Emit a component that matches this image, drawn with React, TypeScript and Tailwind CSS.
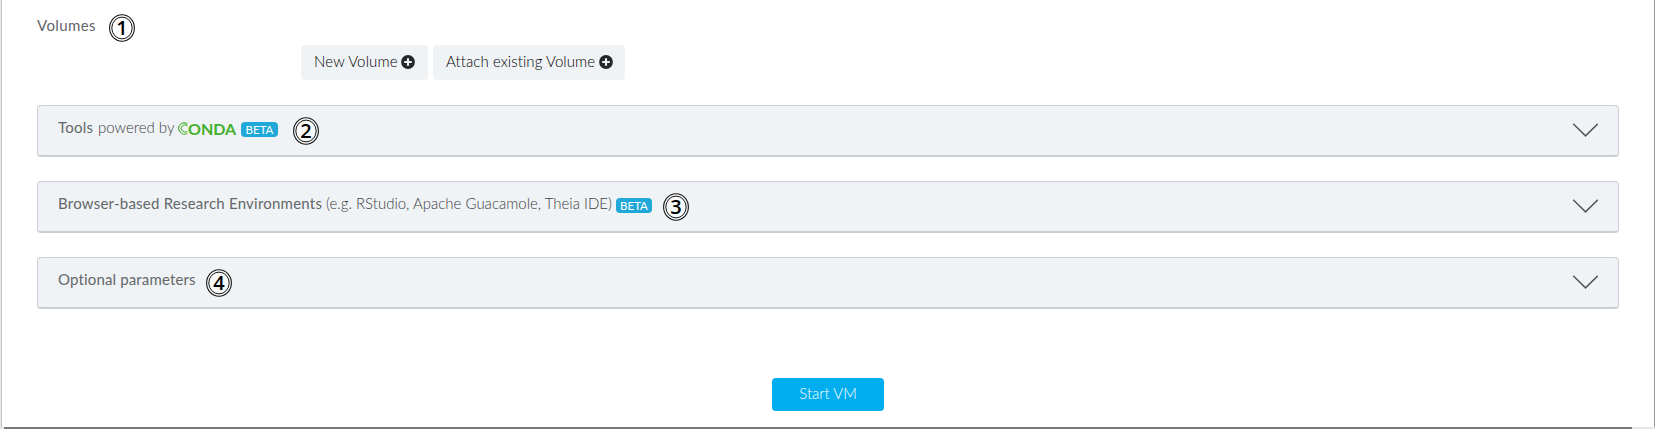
import type { ReactNode } from "react";

function Marker({ n, className = "" }: { n: number; className?: string }) {
  return (
    <span className={`relative flex h-[28px] w-[26px] shrink-0 items-center justify-center ${className}`}>
      <svg className="absolute inset-0" width="26" height="28" viewBox="0 0 26 28" fill="none" stroke="#151515">
        <ellipse cx="13" cy="14" rx="12.4" ry="13.2" fill="#fff" fillOpacity="0.5" strokeWidth="1.1" />
        <ellipse cx="13" cy="14" rx="10.2" ry="10.9" strokeWidth="1" />
      </svg>
      <span className="relative mb-[1px] font-['Open_Sans',sans-serif] text-[20px] leading-[28px] font-semibold text-black">{n}</span>
    </span>
  );
}

function Beta({ className }: { className: string }) {
  return (
    <span className={`flex h-[15px] shrink-0 items-center justify-center rounded-[4px] bg-[#20a8d8] text-[11.5px] leading-[15px] text-white ${className}`}>
      BETA
    </span>
  );
}

function Conda() {
  return (
    <span className="mb-[1px] ml-[2px] flex w-[59px] shrink-0 items-center text-[#43b02a]">
      <svg className="shrink-0" width="11" height="13" viewBox="0 0 11 13" fill="none" stroke="currentColor">
        <path d="M10.5 1.8A5.6 5.6 0 1 0 10.5 11.2" strokeWidth="1" />
        <path d="M10.5 4A3.6 3.6 0 1 0 10.5 9" strokeWidth="1" />
        <path d="M9.5 2.5A4.5 4.5 0 0 0 3 9.5" strokeWidth="1" strokeDasharray="1.2 1" />
      </svg>
      <span className="text-[16px] leading-[16px] font-bold">ONDA</span>
    </span>
  );
}

function Plus() {
  return (
    <svg className="ml-1 shrink-0" width="14" height="14" viewBox="0 0 14 14">
      <circle cx="7" cy="7" r="6.9" fill="#23282c" />
      <path d="M7 3.2v7.6M3.2 7h7.6" stroke="#f0f3f5" strokeWidth="2.1" />
    </svg>
  );
}

function Panel({ children }: { children: ReactNode }) {
  return (
    <section className="flex h-[52px] w-[1582px] items-start justify-between rounded-[4px] border border-b-2 border-[#c8ced3] bg-[#f0f3f5] pr-[20px] pl-[20px]">
      <div className="flex h-[46px] items-center whitespace-nowrap">{children}</div>
      <svg className="mt-[17px]" width="26" height="15" viewBox="0 0 26 15" fill="none" stroke="#555a5c" strokeWidth="1.5">
        <path d="M1.2 .8 13.5 12.9 25.8 .8" />
      </svg>
    </section>
  );
}

export default function App() {
  return (
    <main className="flex h-[429px] w-[1655px] flex-col overflow-hidden bg-[#e6e6e6] font-[Lato,sans-serif] text-[15px] text-[#63676a] [font-variant-ligatures:none]">
      <div className="ml-[1px] h-[427px] w-[1654px] border-r border-l border-r-[#999] border-l-[#c4c4c4] bg-white pl-[35px]">
        <header className="flex h-[45px] items-start">
          <h2 className="mt-[14px] w-[59px] leading-[22px] tracking-[0.4px]">Volumes</h2>
          <Marker n={1} className="mt-[14px] ml-[13px]" />
        </header>
        <div className="ml-[264px] flex h-[60px] items-start gap-[5px] whitespace-nowrap text-black">
          <button className="flex h-[35px] w-[127px] items-center rounded-[4px] bg-[#f0f3f5] pb-[1px] pl-[13px]">
            <span className="mb-[2px] w-[83px] text-left font-light tracking-[0.15px]">New Volume</span>
            <Plus />
          </button>
          <button className="flex h-[35px] w-[192px] items-center rounded-[4px] bg-[#f0f3f5] pb-[1px] pl-[13px]">
            <span className="mb-[2px] w-[149px] text-left font-light tracking-[0.08px]">Attach existing Volume</span>
            <Plus />
          </button>
        </div>
        <div className="flex flex-col gap-[24px]">
          <Panel>
            <span className="mb-[3px] w-[40px] tracking-[0.2px]">Tools</span>
            <span className="mb-[3px] w-[77px] font-light text-[#3c4043]">powered by</span>
            <Conda />
            <Beta className="mt-[1px] ml-[5px] w-[37px]" />
            <Marker n={2} className="mt-[4px] ml-[15px]" />
          </Panel>
          <Panel>
            <span className="mb-[3px] w-[268px] tracking-[0.23px]">Browser-based Research Environments</span>
            <span className="mb-[3px] w-[286px] font-light text-[#3c4043]">(e.g. RStudio, Apache Guacamole, Theia IDE)</span>
            <Beta className="mt-[1px] ml-[4px] w-[36px]" />
            <Marker n={3} className="mt-[4px] ml-[11px]" />
          </Panel>
          <Panel>
            <span className="mb-[3px] w-[138px] tracking-[0.15px]">Optional parameters</span>
            <Marker n={4} className="mt-[4px] ml-[10px]" />
          </Panel>
        </div>
        <button className="mt-[69px] ml-[735px] flex h-[33px] w-[112px] items-center justify-center rounded-[4px] bg-[#00aeef] pb-[3px] font-light text-white">
          Start VM
        </button>
      </div>
      <div className="ml-[4px] h-[2px] w-[1628px] bg-[#747877]" />
    </main>
  );
}
